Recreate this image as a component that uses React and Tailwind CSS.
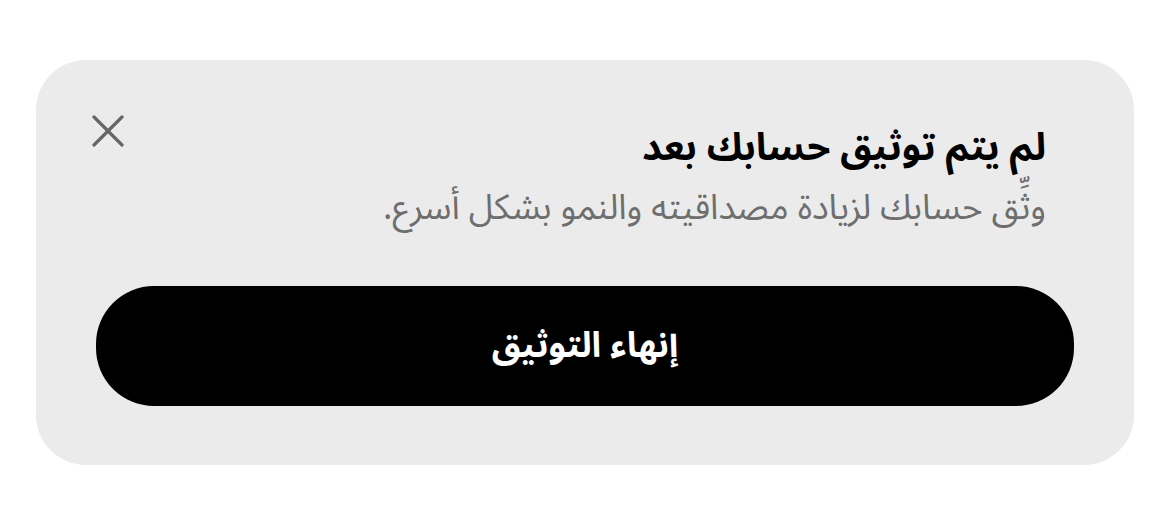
export default function App() {
  return (
    <div className="min-h-screen bg-white pt-[60px] px-[36px]" style={{ fontFamily: '"Noto Sans Arabic", "Noto Sans", "DejaVu Sans", sans-serif' }}>
      <div className="rounded-[50px] bg-[#ebebeb] h-[405px] px-[60px] pt-[58px]">
        <div className="flex items-start justify-between">
          <button className="-mt-[3px] -ml-[4px] text-[#666666]">
            <svg width="32" height="32" viewBox="0 0 32 32" fill="none" stroke="currentColor" strokeWidth="3.2" strokeLinecap="round">
              <path d="M2 2 L30 30 M30 2 L2 30" />
            </svg>
          </button>
          <div dir="rtl" className="pr-[28px] text-right">
            <h2 className="text-[38px] font-bold leading-[60px] text-black">لم يتم توثيق حسابك بعد</h2>
            <p className="text-[35px] leading-[60px] text-[#6e6e6e]">وثِّق حسابك لزيادة مصداقيته والنمو بشكل أسرع.</p>
          </div>
        </div>
        <button dir="rtl" className="mt-[48px] flex h-[120px] w-full items-center justify-center rounded-[58px] bg-black text-[35px] font-bold text-white">
          إنهاء التوثيق
        </button>
      </div>
    </div>
  );
}
